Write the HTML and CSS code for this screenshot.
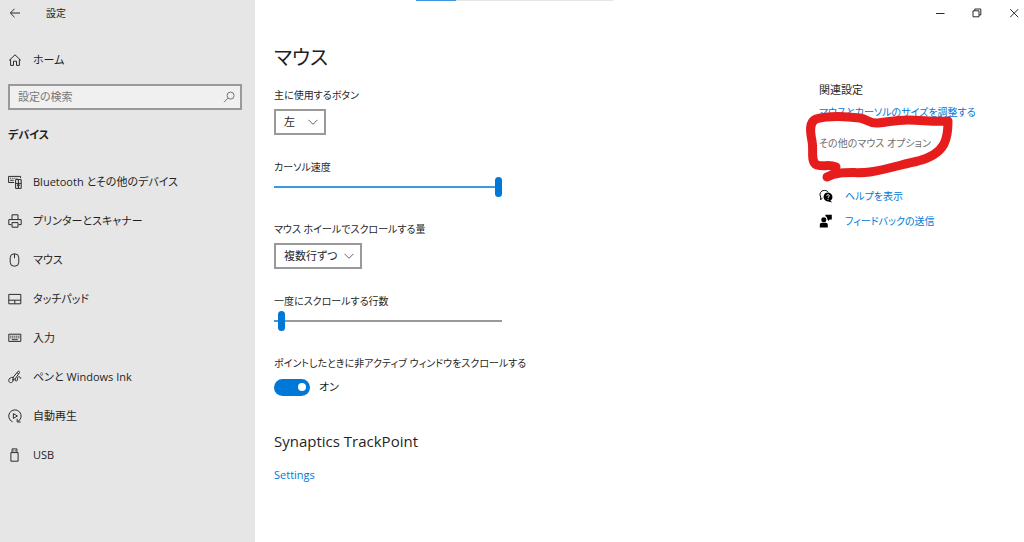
FILE: index.html
```
<!DOCTYPE html>
<html lang="ja">
<head>
  <meta charset="UTF-8" />
  <meta name="viewport" content="width=device-width, initial-scale=1.0"/>
  <title>設定</title>
  <link rel="stylesheet" href="styles.css">
</head>
<body>
  <div class="top-strip"></div>

  <aside class="sidebar">
    <header class="titlebar">
      <button type="button" class="icon-button" aria-label="戻る">
        <svg class="icon" viewBox="0 0 14 14"><path d="M12 7H2.5M6.5 2.8L2.3 7l4.2 4.2"/></svg>
      </button>
      <span class="app-name">設定</span>
    </header>

    <a href="#home" class="nav-link home">
      <svg class="icon" viewBox="0 0 14 14"><path d="M1.2 7.4L7 1.8l5.8 5.6M2.6 6.2v6.2h2.9V8.2h3v4.2h2.9V6.2"/></svg>
      ホーム
    </a>

    <form class="search">
      <input type="search" placeholder="設定の検索" aria-label="設定の検索">
      <button type="submit" class="icon-button" aria-label="検索">
        <svg class="icon thin" viewBox="0 0 14 14"><circle cx="8.6" cy="5.6" r="3.5"/><path d="M6.1 8.1L2 12.2"/></svg>
      </button>
    </form>

    <h2 class="section-name">デバイス</h2>

    <nav class="nav">
      <a href="#bluetooth" class="nav-link">
        <svg class="icon" viewBox="0 0 14 14"><path d="M6.2 7.5H.6V1.4h12v1.8M2.2 3.3h1M4.3 3.3h1M6.4 3.3h1M8.5 3.3h1M2.2 5.3h3.5"/><path d="M7.6 4.6h5.6v8.8H7.6zM10.4 4.6v8.8M7.6 8.4h5.6"/><circle cx="10.4" cy="10.3" r="1"/></svg>
        Bluetooth とその他のデバイス
      </a>
      <a href="#printers" class="nav-link">
        <svg class="icon" viewBox="0 0 14 14"><path d="M4 5.6V.8h6v4.8M3.4 10.6H.8v-5h12.4v5h-2.6M4 8.6h6v4.6H4z"/></svg>
        プリンターとスキャナー
      </a>
      <a href="#mouse" class="nav-link">
        <svg class="icon" viewBox="0 0 14 14"><rect x="2.2" y=".8" width="8.6" height="12.4" rx="4"/><path d="M6.5 1v4.2"/></svg>
        マウス
      </a>
      <a href="#touchpad" class="nav-link">
        <svg class="icon" viewBox="0 0 14 14"><path d="M.8 2.4h12v9.4H.8zM.8 8.2h12M6.8 8.2v3.6"/></svg>
        タッチパッド
      </a>
      <a href="#typing" class="nav-link">
        <svg class="icon" viewBox="0 0 14 14"><path d="M.8 3.2h12v7.2H.8z"/><path d="M2.2 5.2h9.6M2.2 6.9h9.6" stroke-dasharray="1.2 .8"/><path d="M3.8 8.7h6"/></svg>
        入力
      </a>
      <a href="#pen" class="nav-link">
        <svg class="icon" viewBox="0 0 14 14"><path d="M4.6 10.2L5.4 7 10 1.4c.6-.7 2 .3 1.5 1.1L7.4 8.6l-2.8 1.6M9 2.6l1.6 1.2"/><path d="M5.4 7.4C3 7 .7 8.4.7 10.6c0 2.2 3.3 2.8 4.1.8l.8-1.9M7.6 8.4c-.6 1.6-.4 3.2 1 2.6 1.6-.7.2-3.6 2-4.3 1-.3 1.6.4 1.4 1.2-.1.5.5.5 1.3 0"/></svg>
        ペンと Windows Ink
      </a>
      <a href="#autoplay" class="nav-link">
        <svg class="icon" viewBox="0 0 14 14"><path d="M4.6 12.8a6.2 6.2 0 1 1 5.3-.3M9.2 9.8v3.2h3.4"/><path d="M5.4 4.6v4.8L9.4 7z"/></svg>
        自動再生
      </a>
      <a href="#usb" class="nav-link">
        <svg class="icon" viewBox="0 0 14 14"><path d="M2.9 4.6h7.2v8.6H2.9zM4.1 4.6V.9h4.8v3.7M5.7 2.4v1M7.4 2.4v1"/></svg>
        USB
      </a>
    </nav>
  </aside>

  <main class="content">
    <h1>マウス</h1>

    <div class="field">
      <label for="primary-button">主に使用するボタン</label>
      <div class="select">
        <select id="primary-button">
          <option>左</option>
          <option>右</option>
        </select>
        <svg class="chevron" viewBox="0 0 10 10"><path d="M.5 2.8L5 7.3l4.5-4.5"/></svg>
      </div>
    </div>

    <div class="field">
      <label for="cursor-speed">カーソル速度</label>
      <input type="range" id="cursor-speed" min="0" max="100" value="100" style="--fill: 100%">
    </div>

    <div class="field">
      <label for="wheel-amount">マウス ホイールでスクロールする量</label>
      <div class="select">
        <select id="wheel-amount">
          <option>複数行ずつ</option>
        </select>
        <svg class="chevron" viewBox="0 0 10 10"><path d="M.5 2.8L5 7.3l4.5-4.5"/></svg>
      </div>
    </div>

    <div class="field">
      <label for="wheel-lines">一度にスクロールする行数</label>
      <input type="range" id="wheel-lines" min="0" max="100" value="2" style="--fill: 2%">
    </div>

    <div class="field">
      <label for="inactive-scroll">ポイントしたときに非アクティブ ウィンドウをスクロールする</label>
      <div class="toggle">
        <input type="checkbox" role="switch" id="inactive-scroll" checked>
        <span>オン</span>
      </div>
    </div>

    <h2>Synaptics TrackPoint</h2>
    <a href="#settings" class="link">Settings</a>
  </main>

  <aside class="side">
    <div class="window-buttons">
      <button type="button" class="icon-button" aria-label="最小化">
        <svg class="icon" viewBox="0 0 14 14"><path d="M3 7.5h8.5"/></svg>
      </button>
      <button type="button" class="icon-button" aria-label="元に戻す">
        <svg class="icon" viewBox="0 0 14 14"><path d="M3 4.8h6v6H3zM4.8 4.8V3h6v6H9"/></svg>
      </button>
      <button type="button" class="icon-button" aria-label="閉じる">
        <svg class="icon" viewBox="0 0 14 14"><path d="M3.2 3.2l8 8M11.2 3.2l-8 8"/></svg>
      </button>
    </div>

    <div class="related">
      <h3>関連設定</h3>
      <a href="#size" class="link">マウスとカーソルのサイズを調整する</a>
      <div class="marked">
        <a href="#options" class="link muted">その他のマウス オプション</a>
        <svg class="marker" viewBox="0 0 150 72"><path d="M34 56C27 53 22 56 15 54C8 51 12 40 10 30C8 20 7 11 14 8C28 4 50 6 58 7C67 9 68 13 76 12C88 11 92 9 106 9C120 9 132 11 146 10C146 20 145 27 142 33C137 42 128 47 116 50C102 53 82 59 68 61C54 63 38 59 25 66"/></svg>
      </div>
    </div>

    <div class="support">
      <a href="#help" class="link">
        <svg class="icon solid" viewBox="0 0 14 14"><path class="outline" d="M3.4 9.4L1.5 10.6l.3-2.5C-.2 5 1.8 1.4 5.5 1.4c1.8 0 3 .7 3.8 1.8"/><path d="M9 3.6a4.4 4.4 0 1 1-2.2 8.2 4.4 4.4 0 0 1 2.2-8.2zM10.8 11l2.4 2.4-3.8-1z"/><path class="cut" d="M7.7 6.8c.1-1.6 2.7-1.4 2.6 0 0 1-1.3 1-1.3 2.1M9 9.8v1"/></svg>
        ヘルプを表示
      </a>
      <a href="#feedback" class="link">
        <svg class="icon solid" viewBox="0 0 14 14"><circle cx="4.8" cy="5.8" r="2.5"/><path d="M.8 13.6V11c0-1.4.9-2.2 2.2-2.2h3.6c1.3 0 2.2.8 2.2 2.2v2.6zM6.4.8h6.4v4.6h-2L9 7V5.4h-.8c.2-1.5-.4-2.6-1.8-3.2z"/></svg>
        フィードバックの送信
      </a>
    </div>
  </aside>
</body>
</html>
```
FILE: styles.css
```
* {
  box-sizing: border-box;
}
body {
  margin: 0;
  min-height: 100vh;
  display: grid;
  grid-template-columns: 255px 1fr 205px;
  background: #fff;
  color: #1f1f1f;
  font-family: "Open Sans", "Noto Sans CJK JP", sans-serif;
  font-size: 11px;
  line-height: 20px;
  font-feature-settings: "palt";
}
h1, h2, h3 {
  margin: 0;
  font-weight: 400;
}
a {
  color: inherit;
  text-decoration: none;
}
input, select, button {
  margin: 0;
  font: inherit;
  font-feature-settings: inherit;
  color: inherit;
}
.top-strip {
  position: absolute;
  top: 0;
  left: 50%;
  width: 197px;
  height: 1px;
  margin-left: -96px;
  background: linear-gradient(to right, #3f97df 40px, #e6e6e6 40px);
}
.icon {
  width: 14px;
  height: 14px;
  flex: none;
  fill: none;
  stroke: #2b2b2b;
}
.icon.thin {
  stroke: #767676;
}
.icon-button {
  display: flex;
  padding: 0;
  border: none;
  background: none;
}

/* sidebar */
.sidebar {
  background: #e6e6e6;
  padding: 0 13px 0 8px;
}
.titlebar {
  display: flex;
  align-items: center;
  gap: 24px;
  height: 26px;
}
.app-name {
  font-size: 10px;
}
.nav-link {
  display: flex;
  align-items: center;
  gap: 11px;
  height: 39px;
}
.home {
  margin: 14px 0 5px;
}
.search {
  display: flex;
  align-items: center;
  height: 26px;
  padding-right: 4px;
  border: 2px solid #999;
  background: #f0f0f0;
}
.search input {
  flex: 1;
  min-width: 0;
  padding: 0 8px;
  border: none;
  outline: none;
  background: none;
}
.search input::placeholder {
  color: #767676;
}
.section-name {
  margin: 15px 0 17px;
  font-size: 11px;
  font-weight: 700;
}

/* settings */
.content {
  padding: 44px 19px 0;
}
h1 {
  margin-bottom: 13px;
  font-size: 20px;
  line-height: 28px;
}
.field {
  display: flex;
  flex-direction: column;
  align-items: flex-start;
  margin-bottom: 22px;
}
.field label {
  font-size: 10px;
}
.select {
  position: relative;
  margin-top: 4px;
}
.select select {
  appearance: none;
  min-width: 52px;
  height: 26px;
  padding: 0 22px 0 8px;
  border: 2px solid #999;
  border-radius: 0;
  background: #fff;
}
.chevron {
  position: absolute;
  top: 8px;
  right: 8px;
  width: 10px;
  height: 10px;
  fill: none;
  stroke: #666;
  pointer-events: none;
}
input[type="range"] {
  appearance: none;
  width: 228px;
  max-width: 100%;
  height: 20px;
  background: linear-gradient(to right, #3a9ae4 var(--fill), #999 var(--fill)) center / 100% 2px no-repeat;
}
input[type="range"]::-webkit-slider-thumb {
  appearance: none;
  width: 7px;
  height: 20px;
  border-radius: 4px;
  background: #0078d7;
}
.toggle {
  display: flex;
  align-items: center;
  gap: 9px;
  margin-top: 4px;
}
.toggle input {
  appearance: none;
  display: flex;
  align-items: center;
  justify-content: flex-end;
  width: 36px;
  height: 17px;
  padding: 0 4px;
  border-radius: 9px;
  background: #0078d7;
}
.toggle input::before {
  content: "";
  width: 8px;
  height: 8px;
  border-radius: 50%;
  background: #fff;
}
.toggle input:not(:checked) {
  justify-content: flex-start;
  background: #999;
}
.content h2 {
  margin: 30px 0 10px;
  font-size: 15px;
  line-height: 28px;
}
.link {
  color: #0078d7;
}

/* related links */
.window-buttons {
  display: flex;
  justify-content: flex-end;
  gap: 23px;
  height: 26px;
  align-items: center;
  padding-right: 3px;
}
.related {
  margin-top: 54px;
}
.related h3 {
  margin-bottom: 2px;
  font-size: 11px;
}
.related .link {
  display: block;
  font-size: 10px;
  white-space: nowrap;
}
.marked {
  position: relative;
  margin-top: 11px;
}
.link.muted {
  color: #6e6e6e;
}
.marker {
  position: absolute;
  top: -22px;
  left: -17px;
  width: 150px;
  height: 72px;
  overflow: visible;
  fill: none;
  stroke: #e71c1c;
  stroke-width: 9;
  stroke-linecap: round;
  stroke-linejoin: round;
  pointer-events: none;
}
.support {
  display: flex;
  flex-direction: column;
  gap: 5px;
  margin-top: 33px;
}
.support .link {
  display: flex;
  align-items: center;
  gap: 12px;
  font-size: 10px;
}
.icon.solid {
  fill: #000;
  stroke: none;
}
.solid .outline {
  fill: none;
  stroke: #000;
}
.solid .cut {
  fill: none;
  stroke: #fff;
}
```
